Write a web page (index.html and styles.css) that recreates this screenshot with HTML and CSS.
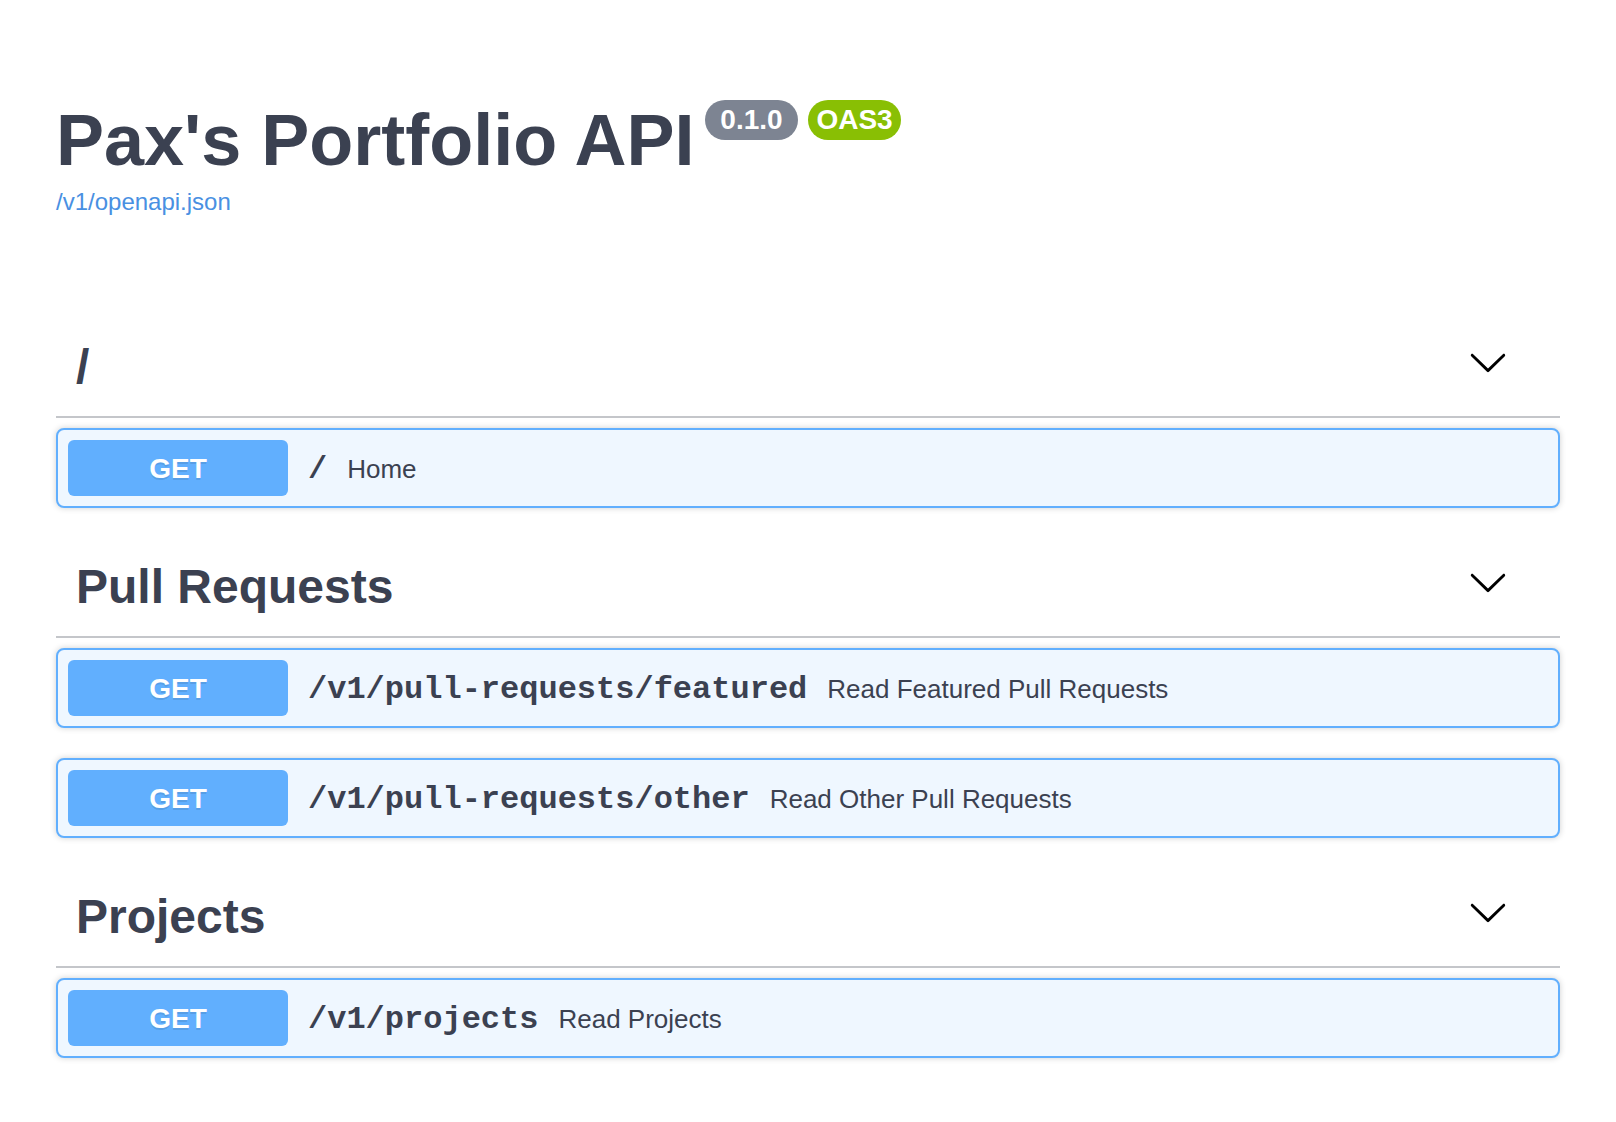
FILE: index.html
```html
<!DOCTYPE html>
<html lang="en">
<head>
<meta charset="utf-8">
<title>Pax's Portfolio API - Swagger UI</title>
<link rel="stylesheet" href="styles.css">
</head>
<body>
<div class="page">
  <div class="info">
    <div class="title-row">
      <h2 class="title">Pax's Portfolio API</h2>
      <small class="badge"><pre class="version"> 0.1.0 </pre></small>
      <small class="badge stamp"><pre class="version">OAS3</pre></small>
    </div>
    <a class="link" href="#">/v1/openapi.json</a>
  </div>

  <section class="tag-section">
    <h3 class="tag">
      <span class="tag-name">/</span>
      <svg class="arrow" viewBox="0 0 20 20" width="40" height="40" aria-hidden="true"><path d="M17.418 6.109c.272-.268.709-.268.979 0s.271.701 0 .969l-7.908 7.83c-.27.268-.707.268-.979 0l-7.908-7.830c-.27-.268-.27-.701 0-.969.271-.268.709-.268.979 0L10 13.25l7.418-7.141z"/></svg>
    </h3>
    <div class="opblock">
      <div class="summary">
        <span class="method">GET</span>
        <span class="path">/</span>
        <span class="desc">Home</span>
      </div>
    </div>
  </section>

  <section class="tag-section">
    <h3 class="tag">
      <span class="tag-name">Pull Requests</span>
      <svg class="arrow" viewBox="0 0 20 20" width="40" height="40" aria-hidden="true"><path d="M17.418 6.109c.272-.268.709-.268.979 0s.271.701 0 .969l-7.908 7.83c-.27.268-.707.268-.979 0l-7.908-7.830c-.27-.268-.27-.701 0-.969.271-.268.709-.268.979 0L10 13.25l7.418-7.141z"/></svg>
    </h3>
    <div class="opblock">
      <div class="summary">
        <span class="method">GET</span>
        <span class="path">/v1/pull-requests/featured</span>
        <span class="desc">Read Featured Pull Requests</span>
      </div>
    </div>
    <div class="opblock">
      <div class="summary">
        <span class="method">GET</span>
        <span class="path">/v1/pull-requests/other</span>
        <span class="desc">Read Other Pull Requests</span>
      </div>
    </div>
  </section>

  <section class="tag-section">
    <h3 class="tag">
      <span class="tag-name">Projects</span>
      <svg class="arrow" viewBox="0 0 20 20" width="40" height="40" aria-hidden="true"><path d="M17.418 6.109c.272-.268.709-.268.979 0s.271.701 0 .969l-7.908 7.83c-.27.268-.707.268-.979 0l-7.908-7.830c-.27-.268-.27-.701 0-.969.271-.268.709-.268.979 0L10 13.25l7.418-7.141z"/></svg>
    </h3>
    <div class="opblock">
      <div class="summary">
        <span class="method">GET</span>
        <span class="path">/v1/projects</span>
        <span class="desc">Read Projects</span>
      </div>
    </div>
  </section>
</div>
</body>
</html>
```

FILE: styles.css
```css
* { box-sizing: border-box; }

html, body {
  margin: 0;
  padding: 0;
  background: #ffffff;
}

body {
  font-family: "Liberation Sans", Helvetica, Arial, sans-serif;
  color: #3b4151;
}

.page {
  padding: 99px 56px 40px;
}

.info {
  margin-bottom: 102px;
}

.title-row {
  display: flex;
  align-items: flex-start;
}

.title {
  margin: 0;
  font-size: 72px;
  line-height: 83px;
  font-weight: 700;
  color: #3b4151;
}

.badge {
  display: inline-block;
  margin: 1px 0 0 10px;
  padding: 4px 8px;
  border-radius: 57px;
  background: #7d8492;
}

.badge.stamp {
  background: #89bf04;
}

.version {
  margin: 0;
  padding: 0;
  font-family: "Liberation Sans", Helvetica, Arial, sans-serif;
  font-size: 28px;
  line-height: 32px;
  font-weight: 700;
  color: #ffffff;
  white-space: pre;
}

.link {
  display: block;
  margin-top: 6px;
  font-size: 24px;
  line-height: 28px;
  color: #4990e2;
  text-decoration: none;
}

.tag-section {
  display: flex;
  flex-direction: column;
}

.tag {
  display: flex;
  align-items: center;
  height: 100px;
  margin: 0 0 10px;
  padding: 20px 40px 20px 20px;
  border-bottom: 2px solid rgba(59, 65, 81, 0.3);
  font-size: 48px;
  font-weight: 700;
}

.tag-name {
  flex: 1;
  line-height: 58px;
}

.arrow {
  flex: none;
  margin: 0 12px 10px 0;
  fill: #000000;
}

.opblock {
  margin: 0 0 30px;
  border: 2px solid #61affe;
  border-radius: 8px;
  background: #eff7ff;
  box-shadow: 0 0 6px rgba(0, 0, 0, 0.19);
}

.summary {
  display: flex;
  align-items: center;
  padding: 10px;
}

.method {
  flex: none;
  width: 220px;
  padding: 13px 0 11px;
  border-radius: 6px;
  background: #61affe;
  color: #ffffff;
  font-size: 28px;
  line-height: 32px;
  font-weight: 700;
  text-align: center;
  text-shadow: 0 2px 0 rgba(0, 0, 0, 0.1);
}

.path {
  padding: 3px 20px 0;
  font-family: "Liberation Mono", "Courier New", monospace;
  font-size: 32px;
  font-weight: 700;
  color: #3b4151;
}

.desc {
  flex: 1;
  padding-top: 2px;
  font-size: 26px;
  color: #3b4151;
}
```
